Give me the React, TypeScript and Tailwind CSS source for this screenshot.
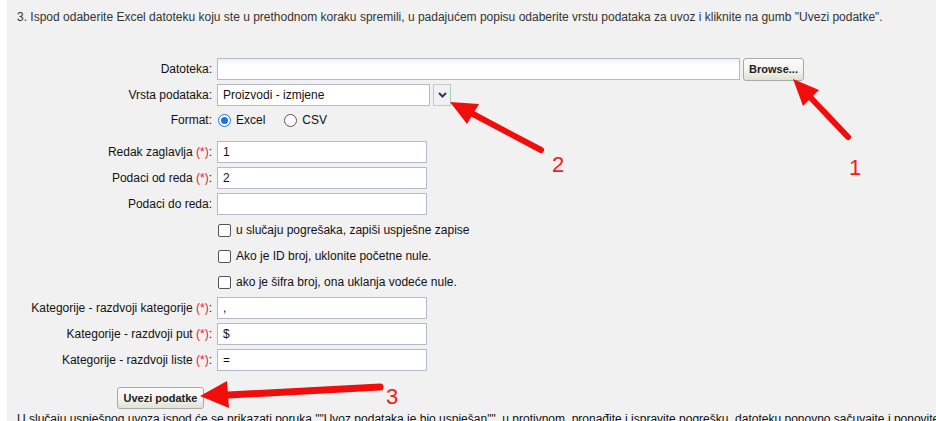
import React from "react";

const font = "font-['Liberation_Sans',Arial,sans-serif]";

function Req() {
  return <span className="text-[#e8203a]">(*)</span>;
}

function Row({ label, children }: { label: React.ReactNode; children?: React.ReactNode }) {
  return (
    <div className="flex h-[22px] items-center">
      <div className="w-[210px] shrink-0 pr-[5px] text-right text-[12px] text-[#111]">{label}</div>
      {children}
    </div>
  );
}

function TextInput({ value = "", width = "w-[210px]" }: { value?: string; width?: string }) {
  return (
    <div className={`${width} flex h-[22px] items-center border border-[#b4b9cc] bg-white pl-[5px] text-[12px] text-[#111]`}>
      {value}
    </div>
  );
}

function CheckRow({ text }: { text: string }) {
  return (
    <div className="flex h-[22px] items-center pl-[211px]">
      <span className="h-[13px] w-[13px] rounded-[2px] border border-[#555] bg-white" />
      <span className="ml-[5px] text-[12px] text-[#111]">{text}</span>
    </div>
  );
}

function Radio({ checked, label }: { checked?: boolean; label: string }) {
  return (
    <div className="flex items-center">
      {checked ? (
        <span className="flex h-[13px] w-[13px] items-center justify-center rounded-full border-[1.5px] border-[#1a73e8] bg-white">
          <span className="h-[7px] w-[7px] rounded-full bg-[#1a73e8]" />
        </span>
      ) : (
        <span className="h-[13px] w-[13px] rounded-full border border-[#555] bg-white" />
      )}
      <span className="ml-[5px] text-[12px] text-[#111]">{label}</span>
    </div>
  );
}

function Annotations() {
  return (
    <svg className="pointer-events-none absolute left-0 top-0" width="936" height="421" viewBox="0 0 936 421">
      <g stroke="#f20d0d" strokeWidth="6" strokeLinecap="round" fill="#f20d0d">
        <line x1="848" y1="137" x2="811" y2="98" />
        <line x1="541" y1="150" x2="473" y2="114" />
        <line x1="380" y1="387" x2="228" y2="395" strokeWidth="7" />
      </g>
      <g fill="#f20d0d">
        <polygon points="793,79 803,106 819,90" />
        <polygon points="450,102 467,124 479,104" />
        <polygon points="200,396 229,408 227,381" />
      </g>
      <g fill="#f21b1b" fontFamily="Liberation Sans, Arial, sans-serif" fontSize="22">
        <text x="849" y="175">1</text>
        <text x="552" y="172">2</text>
        <text x="386" y="404">3</text>
      </g>
    </svg>
  );
}

export default function App() {
  return (
    <div className={`${font} relative h-[421px] w-[936px] overflow-hidden bg-white`}>
      <div className="ml-[7px] h-full bg-[#f1f1f1] pl-[10px] pt-[10px]">
        <p className="whitespace-nowrap text-[12px] leading-[14px] text-[#333]">
          3. Ispod odaberite Excel datoteku koju ste u prethodnom koraku spremili, u padajućem popisu odaberite vrstu podataka za uvoz i kliknite na gumb "Uvezi podatke".
        </p>

        <div className="-ml-[10px] mt-[34px] flex flex-col">
          <Row label="Datoteka:">
            <div className="h-[22px] w-[523px] border border-[#b4b9cc] bg-gradient-to-b from-[#eef0f4] to-white to-[30%]" />
            <button className="ml-[3px] h-[23px] w-[61px] rounded-[3px] border border-[#a9a9a9] bg-gradient-to-b from-[#fafafa] via-[#f4f4f2] to-[#dfe3d2] text-[11px] font-bold text-[#222]">
              Browse...
            </button>
          </Row>

          <div className="mt-[4px]">
            <Row label="Vrsta podataka:">
              <TextInput value="Proizvodi - izmjene" width="w-[213px]" />
              <div className="ml-[3px] flex h-[22px] w-[18px] items-center justify-center border border-[#c3c6cc] border-r-[#a7d3b0] bg-[#f1f1f1]">
                <svg width="9" height="6" viewBox="0 0 9 6">
                  <path d="M1 1 L4.5 4.5 L8 1" stroke="#26396a" strokeWidth="2" fill="none" />
                </svg>
              </div>
            </Row>
          </div>

          <div className="mt-[4px] flex h-[20px] items-center">
            <div className="w-[210px] shrink-0 pr-[5px] text-right text-[12px] text-[#111]">Format:</div>
            <div className="flex items-center gap-[19px] pl-[1px]">
              <Radio checked label="Excel" />
              <Radio label="CSV" />
            </div>
          </div>

          <div className="mt-[11px] flex flex-col gap-[4px]">
            <Row label={<>Redak zaglavlja <Req />:</>}>
              <TextInput value="1" />
            </Row>
            <Row label={<>Podaci od reda <Req />:</>}>
              <TextInput value="2" />
            </Row>
            <Row label="Podaci do reda:">
              <TextInput />
            </Row>
            <CheckRow text="u slučaju pogrešaka, zapiši uspješne zapise" />
            <CheckRow text="Ako je ID broj, uklonite početne nule." />
            <CheckRow text="ako je šifra broj, ona uklanja vodeće nule." />
            <Row label={<>Kategorije - razdvoji kategorije <Req />:</>}>
              <TextInput value="," />
            </Row>
            <Row label={<>Kategorije - razdvoji put <Req />:</>}>
              <TextInput value="$" />
            </Row>
            <Row label={<>Kategorije - razdvoji liste <Req />:</>}>
              <TextInput value="=" />
            </Row>
          </div>

          <div className="mt-[14px] pl-[110px]">
            <button className="h-[22px] w-[87px] rounded-[3px] border border-[#a9a9a9] bg-gradient-to-b from-[#fafafa] via-[#f4f4f2] to-[#dfe3d2] text-[11px] font-bold text-[#222]">
              Uvezi podatke
            </button>
          </div>
        </div>

        <p className="mt-[3px] whitespace-nowrap text-[12px] leading-[14px] text-[#111]">
          U slučaju uspješnog uvoza ispod će se prikazati poruka ""Uvoz podataka je bio uspješan"", u protivnom, pronađite i ispravite pogrešku, datoteku ponovno sačuvajte i ponovite uvoz.
        </p>
      </div>
      <Annotations />
    </div>
  );
}
